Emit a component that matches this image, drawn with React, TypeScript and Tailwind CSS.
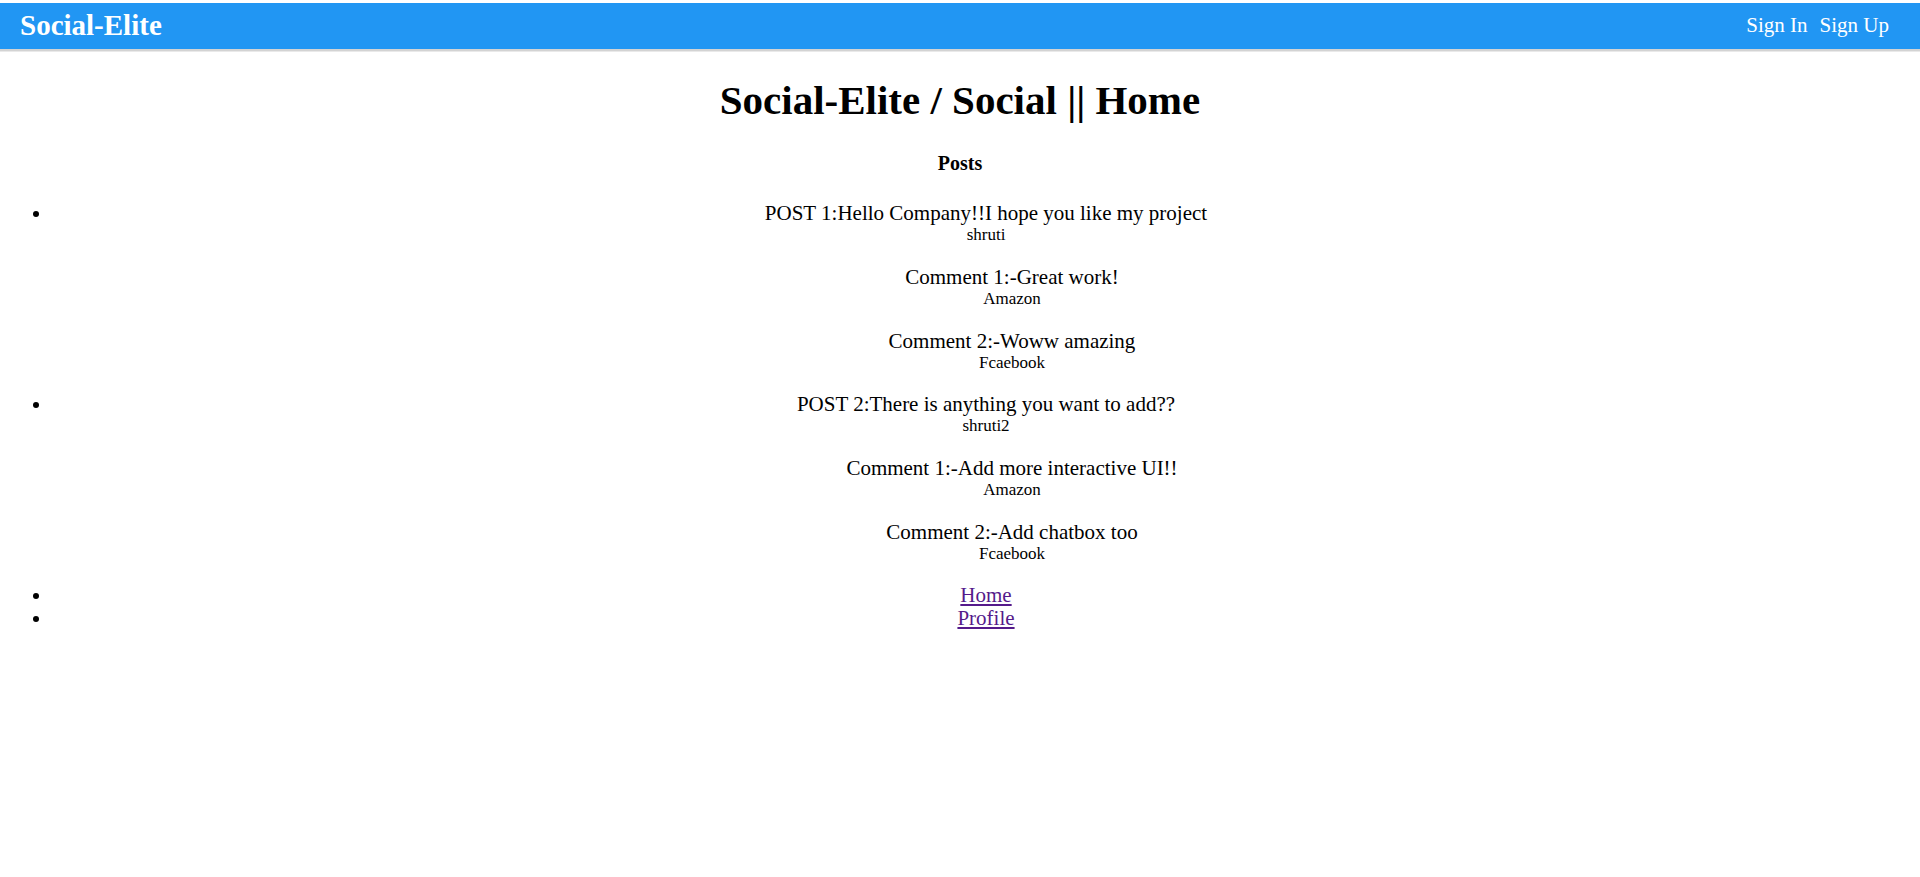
type Comment = { text: string; user: string };
type Post = { text: string; user: string; comments: Comment[] };

const posts: Post[] = [
  {
    text: "POST 1:Hello Company!!I hope you like my project",
    user: "shruti",
    comments: [
      { text: "Comment 1:-Great work!", user: "Amazon" },
      { text: "Comment 2:-Woww amazing", user: "Fcaebook" },
    ],
  },
  {
    text: "POST 2:There is anything you want to add??",
    user: "shruti2",
    comments: [
      { text: "Comment 1:-Add more interactive UI!!", user: "Amazon" },
      { text: "Comment 2:-Add chatbox too", user: "Fcaebook" },
    ],
  },
];

const links = ["Home", "Profile"];

function Entry({ text, user }: Comment) {
  return (
    <p>
      {text}
      <small className="block text-[17px] leading-5">{user}</small>
    </p>
  );
}

export default function App() {
  return (
    <div className="bg-white pt-[3px] font-['Liberation_Serif',serif] text-[21px] leading-[23px] text-black">
      <header className="flex h-[46px] items-center justify-between bg-[#2196f3] pr-[31px] pb-0.5 pl-5 text-white shadow-[0_2px_0_#d3d3d3,0_3px_0_#e9e9e9]">
        <a href="#" className="text-[29px] font-bold">Social-Elite</a>
        <nav className="flex gap-3">
          <a href="#">Sign In</a>
          <a href="#">Sign Up</a>
        </nav>
      </header>
      <main className="text-center">
        <h1 className="mt-7 text-[41px] leading-[47px] font-bold">Social-Elite / Social || Home</h1>
        <h4 className="mt-7 mb-[27px] text-xl leading-[23px] font-bold">Posts</h4>
        <ul className="list-disc pl-[52px]">
          {posts.map((post) => (
            <li key={post.text}>
              <Entry text={post.text} user={post.user} />
              <div className="mt-[21px] mb-5 flex flex-col gap-[21px] pl-[52px]">
                {post.comments.map((c) => (
                  <Entry key={c.text} text={c.text} user={c.user} />
                ))}
              </div>
            </li>
          ))}
        </ul>
        <ul className="list-disc pl-[52px]">
          {links.map((label) => (
            <li key={label}>
              <a href="#" className="text-[#551a8b] underline decoration-2 underline-offset-2">{label}</a>
            </li>
          ))}
        </ul>
      </main>
    </div>
  );
}
